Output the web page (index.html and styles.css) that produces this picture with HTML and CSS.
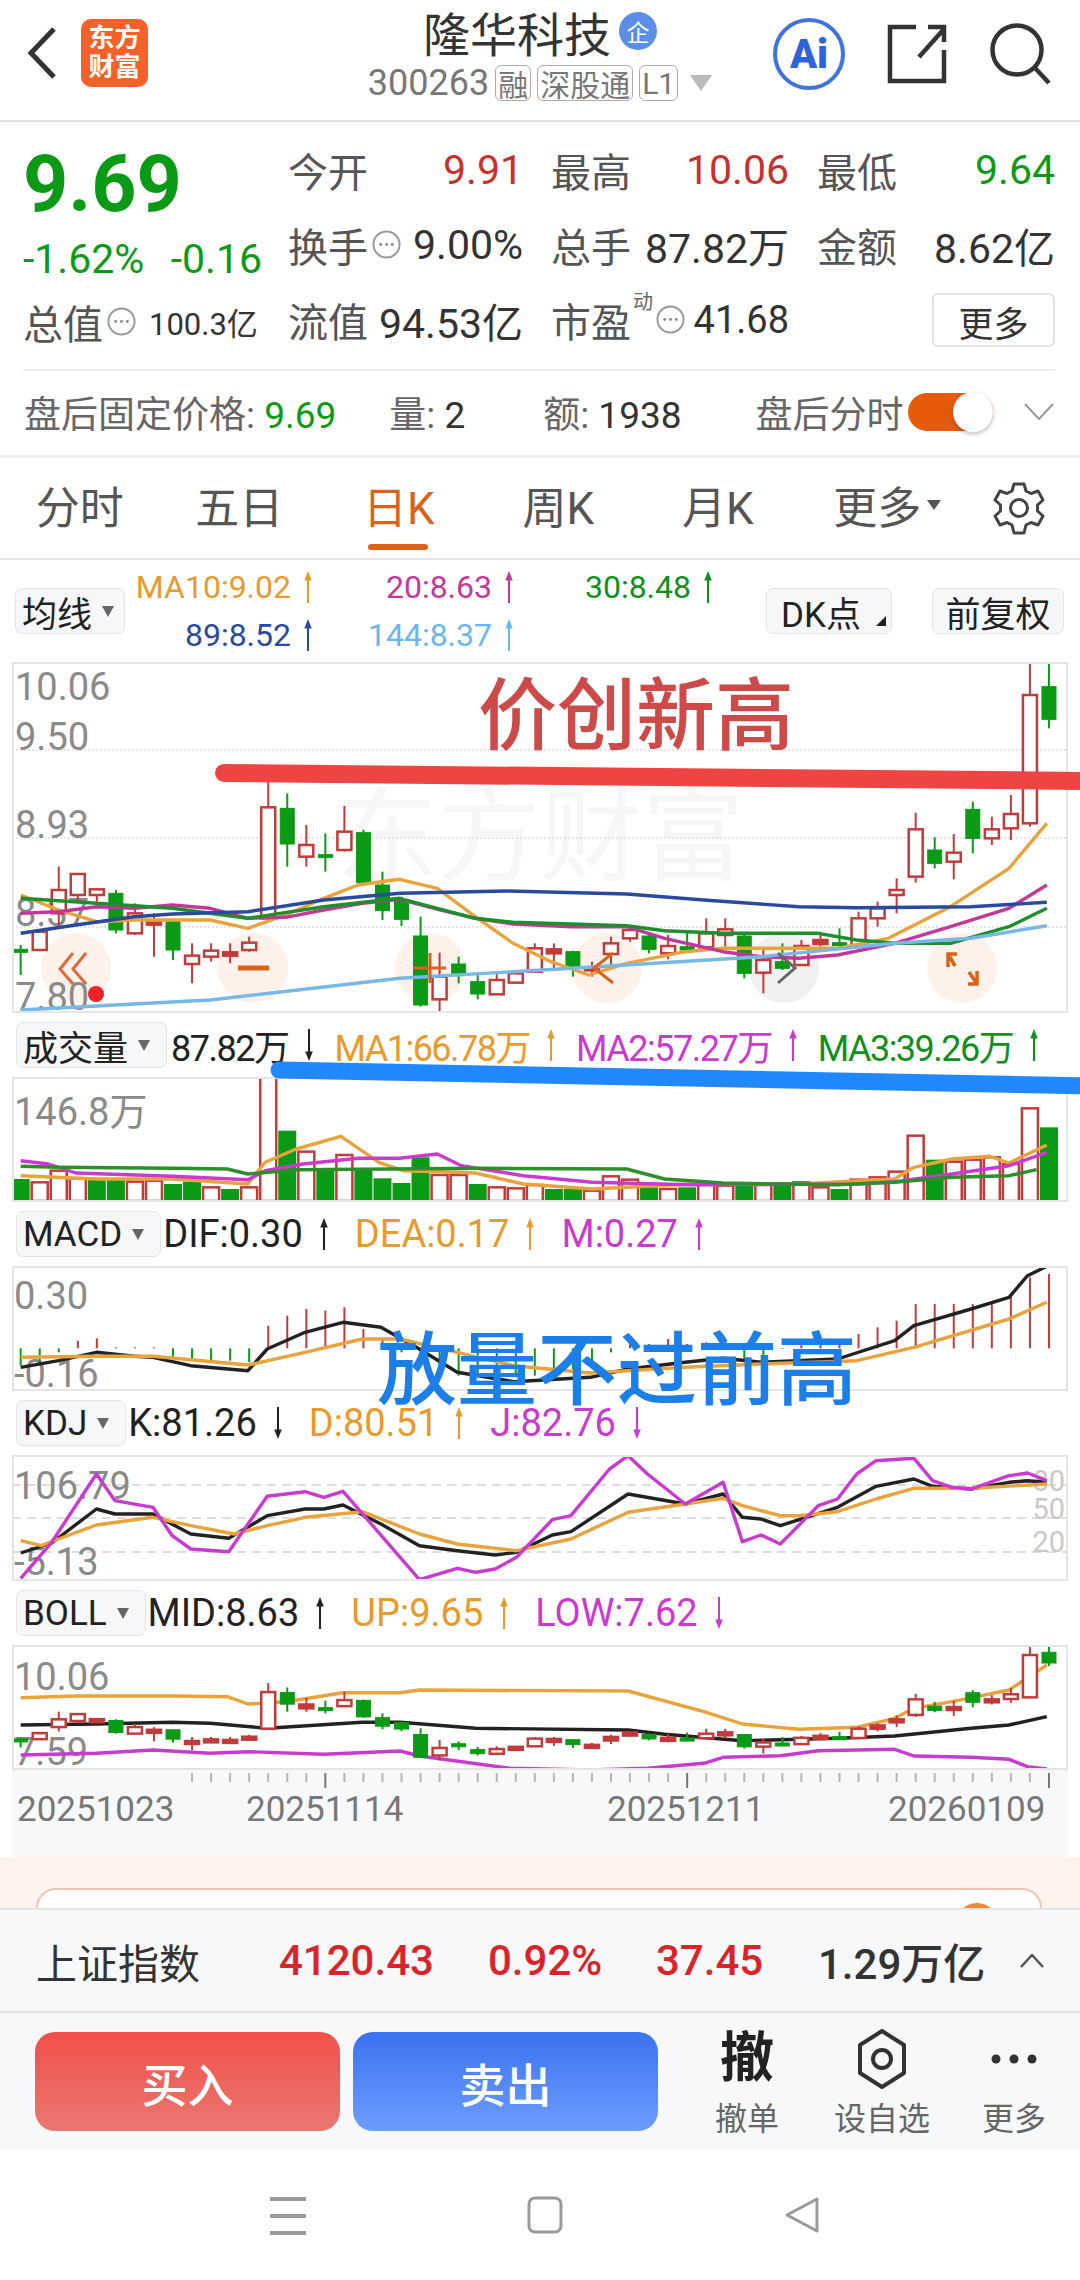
FILE: index.html
```html
<!DOCTYPE html>
<html lang="zh-CN">
<head>
    <meta charset="UTF-8">
    <meta name="viewport" content="width=device-width, initial-scale=1.0">
    <title>隆华科技</title>
    <link rel="stylesheet" href="styles.css">
</head>
<body>
    <!-- small shared icons -->
    <svg class="sprite" width="0" height="0">
        <symbol id="arr" viewBox="0 0 10 34"><path d="M5 34V5" stroke="currentColor" stroke-width="2.2" fill="none"/><path d="M5 0 9 10H1Z" fill="currentColor"/></symbol>
        <symbol id="info" viewBox="0 0 30 30"><circle cx="15" cy="15" r="13.5" fill="none" stroke="#999" stroke-width="2"/><circle cx="9" cy="15" r="1.5" fill="#888"/><circle cx="15" cy="15" r="1.5" fill="#888"/><circle cx="21" cy="15" r="1.5" fill="#888"/></symbol>
    </svg>

    <div class="page">
        <!-- top bar -->
        <header class="top-bar">
            <div class="top-left">
                <svg class="back" width="32" height="54" viewBox="0 0 32 54"><path d="M28 3 5 27l23 24" fill="none" stroke="#333" stroke-width="5"/></svg>
                <div class="logo"><span>东方</span><span>财富</span></div>
            </div>
            <div class="top-center">
                <div class="stock-name">隆华科技<span class="badge">企</span></div>
                <div class="stock-code">300263<span class="tag">融</span><span class="tag">深股通</span><span class="tag">L1</span><i class="tag-caret"></i></div>
            </div>
            <div class="top-right">
                <div class="ai-btn">Ai</div>
                <svg width="60" height="60" viewBox="0 0 60 60"><path d="M29 3H3v54h54V26M32 33 57 5M41 3h16v15" fill="none" stroke="#333" stroke-width="4.5"/></svg>
                <svg width="62" height="62" viewBox="0 0 62 62"><circle cx="28" cy="27" r="24.5" fill="none" stroke="#333" stroke-width="4.5"/><path d="m46 45 14 15" stroke="#333" stroke-width="4.5"/></svg>
            </div>
        </header>

        <!-- quote block -->
        <section class="quote">
            <div class="quote-left">
                <div class="price">9.69</div>
                <div class="change"><span>-1.62%</span><span>-0.16</span></div>
                <div class="cap">总值<svg class="info"><use href="#info"/></svg><span class="cap-num">100.3亿</span></div>
            </div>
            <div class="stat-grid">
                <div class="stat"><span class="lbl">今开</span><span class="red">9.91</span></div>
                <div class="stat"><span class="lbl">最高</span><span class="red">10.06</span></div>
                <div class="stat"><span class="lbl">最低</span><span class="green">9.64</span></div>
                <div class="stat"><span class="lbl">换手<svg class="info"><use href="#info"/></svg></span><span>9.00%</span></div>
                <div class="stat"><span class="lbl">总手</span><span>87.82万</span></div>
                <div class="stat"><span class="lbl">金额</span><span>8.62亿</span></div>
                <div class="stat"><span class="lbl">流值</span><span>94.53亿</span></div>
                <div class="stat"><span class="lbl">市盈<sup class="dyn">动</sup><svg class="info"><use href="#info"/></svg></span><span class="pe-num">41.68</span></div>
                <div class="stat stat-end"><button class="more-btn">更多</button></div>
            </div>
        </section>

        <!-- after hours -->
        <section class="after">
            <span class="after-fixed">盘后固定价格: <b class="green">9.69</b></span>
            <span class="after-vol">量: <b>2</b></span>
            <span class="after-amt">额: <b>1938</b></span>
            <span class="after-time">盘后分时</span>
            <i class="toggle"></i>
            <svg class="after-arrow" width="30" height="18" viewBox="0 0 30 18"><path d="m1 1 14 15L29 1" fill="none" stroke="#999" stroke-width="2"/></svg>
        </section>

        <!-- period tabs -->
        <nav class="tabs">
            <span class="tab">分时</span>
            <span class="tab">五日</span>
            <span class="tab active">日K</span>
            <span class="tab">周K</span>
            <span class="tab">月K</span>
            <span class="tab tab-more">更多<i class="tab-caret"></i></span>
            <svg class="gear" width="54" height="54" viewBox="0 0 54 54"><path d="M22 3h10l2 7 5 2.500 7-2.500 5 9-5.500 5v6l5.500 5-5 9-7-2.500-5 2.500-2 8H22l-2-8-5-2.500-7 2.500-5-9 5.500-5v-6L3 19l5-9 7 2.500 5-2.500Z" fill="none" stroke="#444" stroke-width="3" stroke-linejoin="round"/><circle cx="27" cy="27" r="8.500" fill="none" stroke="#444" stroke-width="3"/></svg>
        </nav>

        <!-- moving averages header -->
        <div class="ma-bar">
            <button class="pick">均线<i class="caret"></i></button>
            <div class="ma-grid">
                <span class="c-orange">MA10:9.02<svg class="arr"><use href="#arr"/></svg></span>
                <span class="c-purple">20:8.63<svg class="arr"><use href="#arr"/></svg></span>
                <span class="c-green">30:8.48<svg class="arr"><use href="#arr"/></svg></span>
                <span class="c-navy">89:8.52<svg class="arr"><use href="#arr"/></svg></span>
                <span class="c-sky">144:8.37<svg class="arr"><use href="#arr"/></svg></span>
            </div>
            <button class="pick dk">DK点<i class="corner"></i></button>
            <button class="pick fq">前复权</button>
        </div>

        <svg id="mainPlot" class="plot" width="1056" height="351" viewBox="12 662 1056 351"></svg>

        <div class="pane-head vol-head">
            <button class="pick">成交量<i class="caret"></i></button>
            <span class="val c-dark">87.82万<svg class="arr dn"><use href="#arr"/></svg></span>
            <span class="val c-orange">MA1:66.78万<svg class="arr"><use href="#arr"/></svg></span>
            <span class="val c-magenta">MA2:57.27万<svg class="arr"><use href="#arr"/></svg></span>
            <span class="val c-green">MA3:39.26万<svg class="arr"><use href="#arr"/></svg></span>
        </div>
        <svg id="volPlot" class="plot" width="1056" height="125" viewBox="12 1078 1056 125"></svg>

        <div class="pane-head">
            <button class="pick">MACD<i class="caret"></i></button>
            <span class="val c-dark">DIF:0.30<svg class="arr"><use href="#arr"/></svg></span>
            <span class="val c-orange">DEA:0.17<svg class="arr"><use href="#arr"/></svg></span>
            <span class="val c-magenta">M:0.27<svg class="arr"><use href="#arr"/></svg></span>
        </div>
        <svg id="macdPlot" class="plot" width="1056" height="125" viewBox="12 1267 1056 125"></svg>

        <div class="pane-head">
            <button class="pick">KDJ<i class="caret"></i></button>
            <span class="val c-dark">K:81.26<svg class="arr dn"><use href="#arr"/></svg></span>
            <span class="val c-orange">D:80.51<svg class="arr"><use href="#arr"/></svg></span>
            <span class="val c-magenta">J:82.76<svg class="arr dn"><use href="#arr"/></svg></span>
        </div>
        <svg id="kdjPlot" class="plot" width="1056" height="126" viewBox="12 1456 1056 126"></svg>

        <div class="pane-head">
            <button class="pick">BOLL<i class="caret"></i></button>
            <span class="val c-dark">MID:8.63<svg class="arr"><use href="#arr"/></svg></span>
            <span class="val c-orange">UP:9.65<svg class="arr"><use href="#arr"/></svg></span>
            <span class="val c-magenta">LOW:7.62<svg class="arr dn"><use href="#arr"/></svg></span>
        </div>
        <svg id="bollPlot" class="plot" width="1056" height="125" viewBox="12 1645 1056 125"></svg>

        <svg id="axisPlot" class="axis" width="1056" height="87" viewBox="12 1770 1056 87"></svg>

        <!-- card peeking out under the fixed bar -->
        <div class="promo"><div class="promo-card"><i class="promo-dot"></i></div></div>

        <div class="ticker">
            <span class="ticker-name">上证指数</span>
            <span class="ticker-a">4120.43</span>
            <span class="ticker-b">0.92%</span>
            <span class="ticker-c">37.45</span>
            <span class="ticker-d">1.29万亿</span>
            <svg class="ticker-up" width="24" height="14" viewBox="0 0 24 14"><path d="m1 13 11-12 11 12" fill="none" stroke="#555" stroke-width="2.500"/></svg>
        </div>

        <div class="actions">
            <button class="trade buy">买入</button>
            <button class="trade sell">卖出</button>
            <div class="act">
                <span class="act-glyph">撤</span>
                <span class="act-lbl">撤单</span>
            </div>
            <div class="act act-fav">
                <svg width="50" height="62" viewBox="0 0 50 62"><path d="M25 3 47 17v28L25 59 3 45V17Z" fill="none" stroke="#333" stroke-width="4" stroke-linejoin="round"/><circle cx="25" cy="31" r="9" fill="none" stroke="#333" stroke-width="4"/></svg>
                <span class="act-lbl">设自选</span>
            </div>
            <div class="act act-more">
                <svg width="48" height="60" viewBox="0 0 48 60"><circle cx="6" cy="30" r="4.500" fill="#333"/><circle cx="24" cy="30" r="4.500" fill="#333"/><circle cx="42" cy="30" r="4.500" fill="#333"/></svg>
                <span class="act-lbl">更多</span>
            </div>
        </div>

        <footer class="sys-nav">
            <svg width="36" height="40" viewBox="0 0 36 40"><path d="M0 3h36M0 20h36M0 37h36" stroke="#999" stroke-width="4"/></svg>
            <svg width="36" height="38" viewBox="0 0 36 38"><rect x="2" y="2" width="32" height="34" rx="6" fill="none" stroke="#999" stroke-width="3"/></svg>
            <svg width="36" height="38" viewBox="0 0 36 38"><path d="M33 3v32L3 19Z" fill="none" stroke="#999" stroke-width="3" stroke-linejoin="round"/></svg>
        </footer>

        <!-- hand drawn marks on top of the screenshot -->
        <svg class="marks" width="1080" height="2280" viewBox="0 0 1080 2280">
            <path d="M224 773 1090 781" stroke="#ee4444" stroke-width="18" stroke-linecap="round"/>
            <path d="M279 1070 1090 1086" stroke="#2288ff" stroke-width="17" stroke-linecap="round"/>
        </svg>
        <span class="note note-red">价创新高</span>
        <span class="note note-blue">放量不过前高</span>
    </div>

    <script src="chart.js"></script>
</body>
</html>
```

FILE: styles.css
```css
* {
    box-sizing: border-box;
}

body {
    margin: 0;
    font-family: Roboto, "Noto Sans CJK SC", sans-serif;
    background: #ffffff;
    color: #333;
}

button {
    font-family: inherit;
}

.sprite {
    position: absolute;
}

.page {
    position: relative;
    width: 1080px;
    height: 2280px;
    overflow: hidden;
}

.red { color: #c9302c; }
.green { color: #0b9a15; }
.c-orange { color: #e89a2c; }
.c-purple { color: #c2389a; }
.c-magenta { color: #c93bd0; }
.c-green { color: #0f8f1c; }
.c-navy { color: #2a4a9e; }
.c-sky { color: #6bb6ea; }
.c-dark { color: #222; }

/* top bar */
.top-bar {
    display: grid;
    grid-template-columns: 1fr auto 1fr;
    height: 122px;
    border-bottom: 2px solid #dfe2e5;
}

.top-left {
    display: flex;
    align-items: center;
    gap: 23px;
    padding-left: 26px;
    padding-bottom: 14px;
}

.logo {
    display: flex;
    flex-direction: column;
    align-items: center;
    justify-content: center;
    width: 67px;
    height: 68px;
    border-radius: 10px;
    background: #f4612a;
    color: #fff;
    font-size: 26px;
    font-weight: 700;
    line-height: 29px;
}

.top-center {
    display: flex;
    flex-direction: column;
    align-items: center;
}

.stock-name {
    display: flex;
    align-items: center;
    height: 62px;
    font-size: 47px;
}

.badge {
    display: flex;
    align-items: center;
    justify-content: center;
    width: 38px;
    height: 38px;
    margin-left: 8px;
    border-radius: 50%;
    background: #5b8fe6;
    color: #fff;
    font-size: 23px;
}

.stock-code {
    display: flex;
    align-items: center;
    font-size: 36px;
    color: #777;
}

.tag {
    display: flex;
    align-items: center;
    height: 36px;
    margin-left: 6px;
    padding: 0 2px;
    border: 1.5px solid #aaa;
    border-radius: 6px;
    font-size: 30px;
    color: #777;
}

.tag-caret {
    width: 0;
    height: 0;
    margin-left: 12px;
    border-left: 11px solid transparent;
    border-right: 11px solid transparent;
    border-top: 16px solid #bbb;
}

.top-right {
    display: flex;
    align-items: center;
    justify-content: flex-end;
    gap: 42px;
    padding-right: 29px;
    padding-bottom: 12px;
}

.ai-btn {
    display: flex;
    align-items: center;
    justify-content: center;
    width: 72px;
    height: 72px;
    border: 4px solid #3f74e0;
    border-radius: 50%;
    color: #2f63d8;
    font-size: 40px;
    font-weight: 900;
}

/* quote block */
.quote {
    display: flex;
    gap: 26px;
    height: 249px;
    margin: 0 25px 0 23px;
    padding-top: 10px;
    border-bottom: 2px solid #eeeeee;
}

.quote-left {
    display: flex;
    flex-direction: column;
    width: 239px;
}

.price {
    height: 95px;
    padding-top: 8px;
    color: #0b9a15;
    font-size: 79px;
    line-height: 88px;
    font-weight: 700;
}

.change {
    display: flex;
    justify-content: space-between;
    align-items: center;
    height: 64px;
    color: #0b9a15;
    font-size: 41px;
}

.cap {
    display: flex;
    align-items: center;
    height: 65px;
    padding-bottom: 4px;
    color: #555;
    font-size: 40px;
}

.cap .info {
    margin: 0 13px 0 4px;
}

.cap-num {
    font-size: 31px;
    color: #333;
}

.info {
    width: 29px;
    height: 29px;
    margin-left: 4px;
    flex-shrink: 0;
}

.stat-grid {
    display: grid;
    grid-template-columns: 235px 238px 238px;
    column-gap: 28px;
    grid-auto-rows: 75px;
}

.stat {
    display: flex;
    justify-content: space-between;
    align-items: center;
    font-size: 41px;
    white-space: nowrap;
}

.stat-end {
    justify-content: flex-end;
}

.lbl {
    position: relative;
    display: flex;
    align-items: center;
    flex-shrink: 0;
    color: #555;
    font-size: 40px;
}

.dyn {
    font-size: 20px;
    line-height: 1;
    margin: -36px 0 0 2px;
    color: #666;
}

.dyn + .info {
    margin-left: 3px;
}

.pe-num {
    font-size: 38px;
}

.more-btn {
    width: 123px;
    height: 54px;
    border: 2px solid #e2e2e2;
    border-radius: 6px;
    background: #fff;
    color: #333;
    font-size: 35px;
}

/* after hours */
.after {
    display: flex;
    align-items: center;
    height: 87px;
    padding: 0 0 3px 24px;
    border-bottom: 3px solid #eeeeee;
    color: #666;
    font-size: 37px;
    white-space: nowrap;
}

.after b {
    font-weight: 400;
    color: #333;
}

.after b.green {
    color: #0b9a15;
}

.after-vol {
    margin-left: 53px;
}

.after-amt {
    margin-left: 78px;
}

.after-time {
    margin-left: 74px;
}

.toggle {
    position: relative;
    width: 85px;
    height: 38px;
    margin-left: 4px;
    border-radius: 19px;
    background: #e65b0a;
}

.toggle::after {
    content: "";
    position: absolute;
    right: 0;
    top: -1px;
    width: 40px;
    height: 40px;
    border-radius: 50%;
    background: #fff;
    box-shadow: 0 2px 5px rgba(0, 0, 0, 0.25);
}

.after-arrow {
    margin-left: 31px;
}

/* tabs */
.tabs {
    display: grid;
    grid-template-columns: repeat(6, 159.5px) 1fr;
    align-items: center;
    height: 102px;
    border-bottom: 2px solid #e6e6e6;
}

.tab {
    position: relative;
    display: flex;
    align-items: center;
    justify-content: center;
    height: 100%;
    padding-bottom: 6px;
    color: #555;
    font-size: 44px;
    white-space: nowrap;
}

.tab.active {
    color: #d9631a;
}

.tab.active::after {
    content: "";
    position: absolute;
    left: 49px;
    bottom: 8px;
    width: 60px;
    height: 6px;
    border-radius: 3px;
    background: #d9631a;
}

.tab-more {
    padding-left: 20px;
}

.tab-caret {
    width: 0;
    height: 0;
    margin-left: 6px;
    border-left: 7px solid transparent;
    border-right: 7px solid transparent;
    border-top: 10px solid #555;
}

.gear {
    justify-self: center;
    margin-right: 0;
}

/* chart headers */
.ma-bar {
    display: flex;
    align-items: center;
    height: 102px;
    padding: 0 16px 0 15px;
}

.pick {
    display: flex;
    align-items: center;
    gap: 10px;
    height: 46px;
    padding: 0 16px 0 6px;
    border: 1.5px solid #e3e4e6;
    border-radius: 7px;
    background: #f6f7f9;
    color: #222;
    font-size: 35px;
    white-space: nowrap;
}

.ma-bar .pick {
    padding-right: 10px;
}

.caret {
    width: 0;
    height: 0;
    border-left: 6px solid transparent;
    border-right: 6px solid transparent;
    border-top: 11px solid #666;
}

.ma-grid {
    display: grid;
    grid-template-columns: 188px 201px 199px;
    grid-auto-rows: 48px;
    align-items: center;
    justify-items: end;
    font-size: 32px;
}

.ma-grid span {
    display: flex;
    align-items: center;
    gap: 12px;
}

.ma-bar .dk {
    position: relative;
    width: 126px;
    margin-left: auto;
    padding-left: 14px;
}

.corner {
    position: absolute;
    right: 5px;
    bottom: 7px;
    width: 0;
    height: 0;
    border-left: 10px solid transparent;
    border-bottom: 10px solid #222;
}

.ma-bar .fq {
    justify-content: center;
    width: 132px;
    margin-left: 40px;
    padding: 0;
}

.pane-head {
    display: flex;
    align-items: center;
    gap: 26px;
    height: 64px;
    padding-left: 16px;
    font-size: 38px;
    white-space: nowrap;
}

.pane-head .pick {
    margin-right: -24px;
}

.vol-head {
    gap: 20px;
    font-size: 36px;
    letter-spacing: -1.5px;
}

.vol-head .pick {
    margin-right: -16px;
    letter-spacing: 0;
}

.val {
    display: inline-flex;
    align-items: center;
    gap: 16px;
}

.arr {
    width: 10px;
    height: 32px;
    flex-shrink: 0;
}

.arr.dn {
    transform: rotate(180deg);
}

/* plots */
.plot {
    display: block;
    margin: 0 12px;
    outline: 2px solid #e4e5e7;
    outline-offset: -2px;
    background: #fff;
}

.plot text {
    fill: #8a8a8a;
    font-size: 38px;
}

.plot text.wm {
    fill: #f6f6f6;
    font-size: 102px;
}

.plot text.band {
    fill: #c9c9c9;
    font-size: 29px;
}

.axis {
    display: block;
    margin: 0 12px;
    background: #f7f8fa;
}

.axis text {
    fill: #777;
    font-size: 35px;
}

/* promo card */
.promo {
    height: 51px;
    padding: 31px 38px 0 36px;
    background: #fff3ee;
    overflow: hidden;
}

.promo-card {
    position: relative;
    height: 40px;
    border: 2px solid #f0c3b4;
    border-radius: 20px 20px 0 0;
    background: #fff;
}

.promo-dot {
    position: absolute;
    right: 42px;
    top: 13px;
    width: 42px;
    height: 42px;
    border-radius: 50%;
    background: #ee8a35;
}

/* bottom ticker */
.ticker {
    display: flex;
    align-items: center;
    height: 105px;
    padding-left: 36px;
    border-top: 2px solid #e2e4e8;
    border-bottom: 2px solid #e2e4e8;
    background: #f7f8fa;
    font-size: 42px;
    font-weight: 500;
    white-space: nowrap;
}

.ticker-name {
    width: 243px;
    font-size: 41px;
    font-weight: 400;
}

.ticker-a,
.ticker-b,
.ticker-c {
    color: #d9242a;
}

.ticker-a { width: 209px; }
.ticker-b { width: 168px; }
.ticker-c { width: 162px; }
.ticker-d { width: 202px; color: #333; }

/* buy / sell row */
.actions {
    display: flex;
    align-items: flex-start;
    height: 136px;
    padding: 19px 0 0 35px;
    background: #f7f8fa;
}

.trade {
    width: 305px;
    height: 99px;
    margin-right: 13px;
    border: none;
    border-radius: 20px;
    color: #fff;
    font-size: 46px;
    font-weight: 500;
}

.buy {
    background: linear-gradient(#f0504a, #e97870);
}

.sell {
    background: linear-gradient(#3a72ee, #6e9dff);
}

.act {
    display: flex;
    flex-direction: column;
    align-items: center;
    width: 70px;
    margin-left: 41px;
    margin-top: -5px;
    color: #666;
}

.act-fav {
    width: 100px;
    margin-left: 50px;
}

.act-more {
    margin-left: 47px;
}

.act-glyph {
    height: 64px;
    color: #222;
    font-size: 54px;
    line-height: 64px;
    font-weight: 700;
}

.act svg {
    height: 64px;
}

.act-lbl {
    margin-top: 8px;
    font-size: 32px;
    line-height: 40px;
    white-space: nowrap;
}

/* android nav bar */
.sys-nav {
    display: flex;
    justify-content: center;
    gap: 221px;
    height: 131px;
    padding: 47px 0 0 10px;
    background: #fff;
}

/* annotations */
.marks {
    position: absolute;
    left: 0;
    top: 0;
    pointer-events: none;
}

.note {
    position: absolute;
    white-space: nowrap;
    line-height: 1;
    font-weight: 500;
}

.note-red {
    left: 478px;
    top: 678px;
    color: #cc4a48;
    font-size: 79px;
}

.note-blue {
    left: 377px;
    top: 1331px;
    color: #1c7fe8;
    font-size: 80px;
}
```

FILE: chart.js
```js
// all y values below are read off the reference crops (1568 wide, 3x tall),
// toX and the top argument of line() turn them into page pixels, so the svg viewBoxes stay in page coords
const NS = "http://www.w3.org/2000/svg";
const RED = "#c23b3b";
const GREEN = "#0b9a15";

function toX(z) { return z / 1.452; }
function candleX(i) { return toX(30 + 27.65 * i); }

function add(svg, tag, attrs, text) {
    const el = document.createElementNS(NS, tag);
    for (const k in attrs) el.setAttribute(k, attrs[k]);
    if (text) el.textContent = text;
    svg.appendChild(el);
    return el;
}

function line(svg, pts, top, color, width) {
    const d = pts.map(p => toX(p[0]).toFixed(1) + "," + (top + p[1] / 3).toFixed(1)).join(" ");
    add(svg, "polyline", { points: d, fill: "none", stroke: color, "stroke-width": width || 3.4, "stroke-linejoin": "round" });
}

function label(svg, x, y, str, cls, anchor) {
    add(svg, "text", { x: x, y: y, "dominant-baseline": "central", class: cls || "", "text-anchor": anchor || "start" }, str);
}

// type, body top, body bottom, wick high, wick low
const candles = [
    ["g",1168,1172,1155,1245],["r",1115,1170,1115,1170],["r",990,1060,920,1100],["r",942,1005,942,1025],
    ["r",988,1005,985,1025],["g",1000,1110,990,1120],["r",1060,1120,1030,1125],["r",1085,1088,1060,1190],
    ["g",1085,1170,1080,1200],["r",1187,1212,1150,1270],["r",1172,1190,1150,1205],["r",1177,1187,1150,1210],
    ["r",1148,1170,1130,1175],["r",742,1075,660,1080],["g",745,852,700,920],["r",855,890,795,920],
    ["g",884,887,820,935],["r",815,870,738,875],["g",818,968,810,975],["g",975,1052,935,1080],
    ["g",1020,1078,1010,1098],["g",1128,1335,1070,1340],["r",1250,1318,1178,1362],["g",1212,1240,1190,1270],
    ["g",1265,1302,1240,1318],["r",1260,1303,1235,1305],["r",1240,1268,1240,1270],["r",1165,1235,1150,1238],
    ["r",1168,1180,1150,1232],["g",1175,1220,1172,1250],["r",1222,1225,1205,1250],["r",1150,1182,1130,1215],
    ["r",1110,1135,1095,1145],["g",1128,1168,1120,1180],["r",1158,1180,1125,1198],["g",1160,1170,1110,1175],
    ["r",1120,1162,1075,1165],["r",1108,1125,1075,1160],["g",1128,1240,1125,1255],["r",1200,1238,1165,1300],
    ["g",1205,1225,1150,1230],["r",1158,1215,1140,1218],["r",1140,1152,1115,1160],["g",1148,1155,1105,1160],
    ["r",1075,1160,1055,1165],["r",1045,1075,1025,1100],["r",990,1005,955,1060],["r",808,950,758,968],
    ["g",870,910,832,925],["r",878,905,822,958],["g",748,835,725,880],["r",808,835,770,855],
    ["r",762,805,705,840],["r",405,790,307,800],["g",380,478,307,505]
];

function drawCandles(svg, mapY) {
    candles.forEach((c, i) => {
        const x = candleX(i);
        const color = c[0] === "r" ? RED : GREEN;
        const top = mapY(560 + c[1] / 3);
        const h = Math.max(mapY(560 + c[2] / 3) - top, 3);
        add(svg, "line", { x1: x, x2: x, y1: mapY(560 + c[3] / 3), y2: mapY(560 + c[4] / 3), stroke: color, "stroke-width": 2 });
        add(svg, "rect", {
            x: x - 7, y: top, width: 14, height: h,
            fill: c[0] === "r" && h > 4 ? "#fff" : color,
            stroke: color, "stroke-width": c[0] === "r" ? 2.5 : 1
        });
    });
}

/* main k-line pane */
const mainPlot = document.getElementById("mainPlot");
label(mainPlot, 540, 838, "东方财富", "wm", "middle");
[750, 838, 927].forEach(y => {
    add(mainPlot, "line", { x1: 12, x2: 1068, y1: y, y2: y, stroke: "#dddddd", "stroke-width": 1.5, "stroke-dasharray": "2 2" });
});
[[76, "#fbe6d8"], [253, "#fbe6d8"], [430, "#fbe6d8"], [607, "#fbe6d8"], [784, "#e4e4e4"], [962, "#fbe6d8"]].forEach(c => {
    add(mainPlot, "circle", { cx: c[0], cy: 968, r: 35, fill: c[1], "fill-opacity": 0.55 });
});
[["10.06", 687], ["9.50", 737], ["8.93", 825], ["8.37", 913], ["7.80", 997]].forEach(l => label(mainPlot, 15, l[1], l[0]));
drawCandles(mainPlot, y => y);
line(mainPlot, [[30,1005],[85,1050],[140,1085],[195,1080],[305,1080],[360,1105],[415,1065],[470,1015],[520,975],[580,958],[635,985],[690,1070],[745,1150],[800,1205],[855,1245],[910,1210],[995,1175],[1050,1165],[1105,1165],[1216,1165],[1290,1135],[1380,1040],[1465,925],[1520,790]], 560, "#e8a33d");
line(mainPlot, [[30,1060],[85,1055],[140,1040],[195,1045],[250,1035],[305,1045],[360,1075],[415,1072],[470,1050],[526,1030],[581,1018],[640,1050],[690,1075],[745,1092],[830,1100],[910,1100],[965,1135],[1050,1175],[1105,1190],[1160,1195],[1216,1185],[1299,1150],[1380,1100],[1465,1045],[1520,975]], 560, "#c2389a");
line(mainPlot, [[30,1015],[140,1030],[250,1045],[360,1075],[470,1040],[580,1015],[690,1075],[745,1087],[910,1097],[965,1112],[1050,1120],[1188,1120],[1244,1140],[1299,1150],[1380,1150],[1465,1100],[1520,1045]], 560, "#1d8f2c");
line(mainPlot, [[30,1120],[110,1095],[195,1070],[250,1062],[360,1055],[470,1020],[581,1000],[735,993],[910,1002],[1022,1020],[1160,1040],[1244,1043],[1410,1040],[1520,1027]], 560, "#2a4a9e");
line(mainPlot, [[30,1350],[305,1320],[581,1255],[830,1225],[1105,1190],[1299,1150],[1410,1135],[1520,1097]], 560, "#78b8e6");
[
    ["M73 953 60 969 73 984M86 953 73 969 86 984", "#e0693a", 3],
    ["M238 968H269", "#d9631a", 5],
    ["M413 968H446M430 953V983", "#d9631a", 3],
    ["M613 953 594 968 613 983", "#d9631a", 3],
    ["M778 953 795 968 778 983", "#666666", 3],
    ["M948 967V954H957M948 954 955 966M977 971V984H968M977 984 969 972", "#d9631a", 3.5]
].forEach(p => add(mainPlot, "path", { d: p[0], fill: "none", stroke: p[1], "stroke-width": p[2] }));
add(mainPlot, "circle", { cx: 96, cy: 994, r: 8, fill: "#ee2222" });

/* volume pane: tops of the bars */
const volPlot = document.getElementById("volPlot");
const vols = [
    ["g",480],["r",490],["r",455],["r",478],["g",478],["g",478],["r",488],["r",485],["g",495],["g",488],
    ["r",505],["g",510],["r",505],["r",175],["g",335],["r",398],["g",448],["r",408],["g",448],["g",478],
    ["g",492],["g",415],["r",468],["r",468],["g",495],["r",505],["r",508],["r",498],["g",510],["g",510],
    ["r",515],["r",472],["r",482],["g",505],["r",510],["g",505],["r",498],["r",500],["g",500],["r",498],
    ["g",495],["r",490],["r",505],["g",510],["r",482],["r",475],["r",458],["r",350],["g",422],["r",428],
    ["r",422],["r",415],["r",435],["r",268],["g",325]
];
label(volPlot, 14, 1113, "146.8万");
vols.forEach((v, i) => {
    const y = 1020 + v[1] / 3;
    const isRed = v[0] === "r";
    add(volPlot, "rect", {
        x: candleX(i) - (isRed ? 8 : 9), y: y, width: isRed ? 16 : 18, height: 1202 - y,
        fill: isRed ? "#fff" : GREEN, stroke: isRed ? RED : "none", "stroke-width": 2.5
    });
});
line(volPlot, [[30,470],[140,480],[250,480],[360,495],[385,430],[430,390],[495,352],[550,430],[585,455],[640,458],[690,462],[760,495],[860,510],[1000,495],[1160,495],[1299,480],[1327,445],[1382,420],[1437,412],[1465,432],[1520,378]], 1020, "#e8a33d");
line(volPlot, [[30,425],[70,435],[110,462],[250,472],[360,482],[385,455],[440,435],[520,418],[580,418],[635,405],[670,440],[760,470],[860,490],[1000,497],[1244,495],[1300,488],[1382,465],[1465,440],[1520,400]], 1020, "#c93bd0");
line(volPlot, [[30,442],[85,445],[250,448],[330,450],[360,465],[430,452],[700,448],[910,450],[965,480],[1050,492],[1216,497],[1299,490],[1382,475],[1465,470],[1505,452]], 1020, "#2c8f2c");

/* macd pane: bar ends, 988 is the zero line */
const macdPlot = document.getElementById("macdPlot");
const macd = [1040,1035,1000,965,958,985,985,985,1015,1020,1025,1025,1030,920,890,870,875,865,930,960,
    1000,1040,1060,1070,1075,1078,1075,1070,1060,1050,1040,1000,965,975,960,975,970,960,1020,1010,
    990,975,970,965,945,925,905,855,855,855,855,855,830,775,765];
label(macdPlot, 14, 1297, "0.30");
label(macdPlot, 14, 1375, "-0.16");
macd.forEach((v, i) => {
    add(macdPlot, "line", {
        x1: candleX(i), x2: candleX(i), y1: 1020 + 988 / 3, y2: 1020 + v / 3,
        stroke: v > 988 ? GREEN : RED, "stroke-width": 2
    });
});
line(macdPlot, [[30,1045],[85,1025],[140,1000],[195,1012],[222,1015],[277,1040],[360,1055],[388,990],[443,940],[498,910],[553,925],[609,990],[664,1060],[746,1088],[857,1075],[912,1050],[995,1030],[1050,1018],[1105,1030],[1216,1020],[1299,965],[1327,920],[1410,870],[1465,835],[1492,770],[1520,742]], 1020, "#222222");
line(macdPlot, [[30,1015],[140,1012],[222,1012],[360,1038],[443,1000],[526,960],[581,960],[664,1000],[746,1040],[857,1062],[995,1045],[1105,1035],[1244,1025],[1327,985],[1465,900],[1520,850]], 1020, "#e8a33d");

/* kdj pane */
const kdjPlot = document.getElementById("kdjPlot");
[1486, 1519, 1553].forEach(y => {
    add(kdjPlot, "line", { x1: 12, x2: 1068, y1: y, y2: y, stroke: "#dddddd", "stroke-width": 2, "stroke-dasharray": "9 6" });
});
label(kdjPlot, 14, 1487, "106.79");
label(kdjPlot, 14, 1563, "-5.13");
label(kdjPlot, 1065, 1482, "80", "band", "end");
label(kdjPlot, 1065, 1510, "50", "band", "end");
label(kdjPlot, 1065, 1543, "20", "band", "end");
line(kdjPlot, [[30,462],[75,432],[140,330],[167,345],[222,345],[277,405],[332,418],[388,350],[443,330],[470,330],[498,318],[553,375],[609,440],[664,455],[719,468],[750,460],[802,408],[829,398],[912,285],[995,315],[1050,285],[1078,355],[1105,360],[1133,380],[1216,325],[1272,262],[1327,240],[1354,262],[1410,270],[1465,250],[1492,245],[1520,250]], 1400, "#222222");
line(kdjPlot, [[30,425],[60,440],[85,420],[140,378],[222,355],[277,380],[340,405],[388,380],[443,355],[526,338],[609,405],[664,435],[750,455],[829,420],[912,340],[995,315],[1050,298],[1078,320],[1133,350],[1160,350],[1216,338],[1272,300],[1327,268],[1410,268],[1520,255]], 1400, "#e8a33d");
line(kdjPlot, [[30,538],[75,430],[140,225],[167,305],[222,325],[250,410],[277,450],[332,458],[388,292],[443,278],[470,295],[498,277],[609,542],[664,508],[691,520],[719,510],[750,475],[802,362],[829,350],[885,210],[912,170],[940,225],[995,315],[1050,250],[1078,428],[1105,408],[1133,435],[1188,320],[1216,300],[1244,225],[1272,185],[1327,178],[1354,245],[1382,265],[1410,270],[1465,230],[1492,222],[1520,245]], 1400, "#c93bd0");

/* boll pane reuses the candles, squeezed */
const bollPlot = document.getElementById("bollPlot");
label(bollPlot, 14, 1677, "10.06");
label(bollPlot, 14, 1752, "7.59");
line(bollPlot, [[30,893],[110,888],[250,888],[330,890],[360,912],[415,905],[498,878],[581,878],[609,870],[912,873],[1022,935],[1078,972],[1160,988],[1244,982],[1299,955],[1327,925],[1382,905],[1465,870],[1520,795]], 1400, "#e8a33d");
line(bollPlot, [[30,975],[140,972],[250,967],[305,970],[388,985],[526,967],[581,967],[691,985],[912,990],[965,1003],[1078,1022],[1216,1015],[1299,1008],[1410,985],[1465,975],[1520,950]], 1400, "#222222");
line(bollPlot, [[30,1065],[140,1060],[222,1050],[305,1060],[360,1055],[470,1063],[581,1053],[609,1068],[740,1105],[857,1110],[940,1105],[1022,1090],[1050,1072],[1133,1067],[1188,1052],[1299,1048],[1327,1068],[1410,1072],[1465,1078],[1492,1100],[1520,1107]], 1400, "#c93bd0");
drawCandles(bollPlot, y => 1655 + 0.33 * (y - 695));

/* date axis */
const axisPlot = document.getElementById("axisPlot");
for (let i = 9; i < 55; i++) {
    const x = candleX(i);
    const big = i === 16 || i === 35 || i === 54;
    add(axisPlot, "line", { x1: x, x2: x, y1: 1773, y2: big ? 1788 : 1782, stroke: big ? "#777" : "#b5b5b5", "stroke-width": 2 });
}
[["20251023", 17], ["20251114", 246], ["20251211", 607], ["20260109", 888]].forEach(d => {
    label(axisPlot, d[1], 1809, d[0]);
});
```
